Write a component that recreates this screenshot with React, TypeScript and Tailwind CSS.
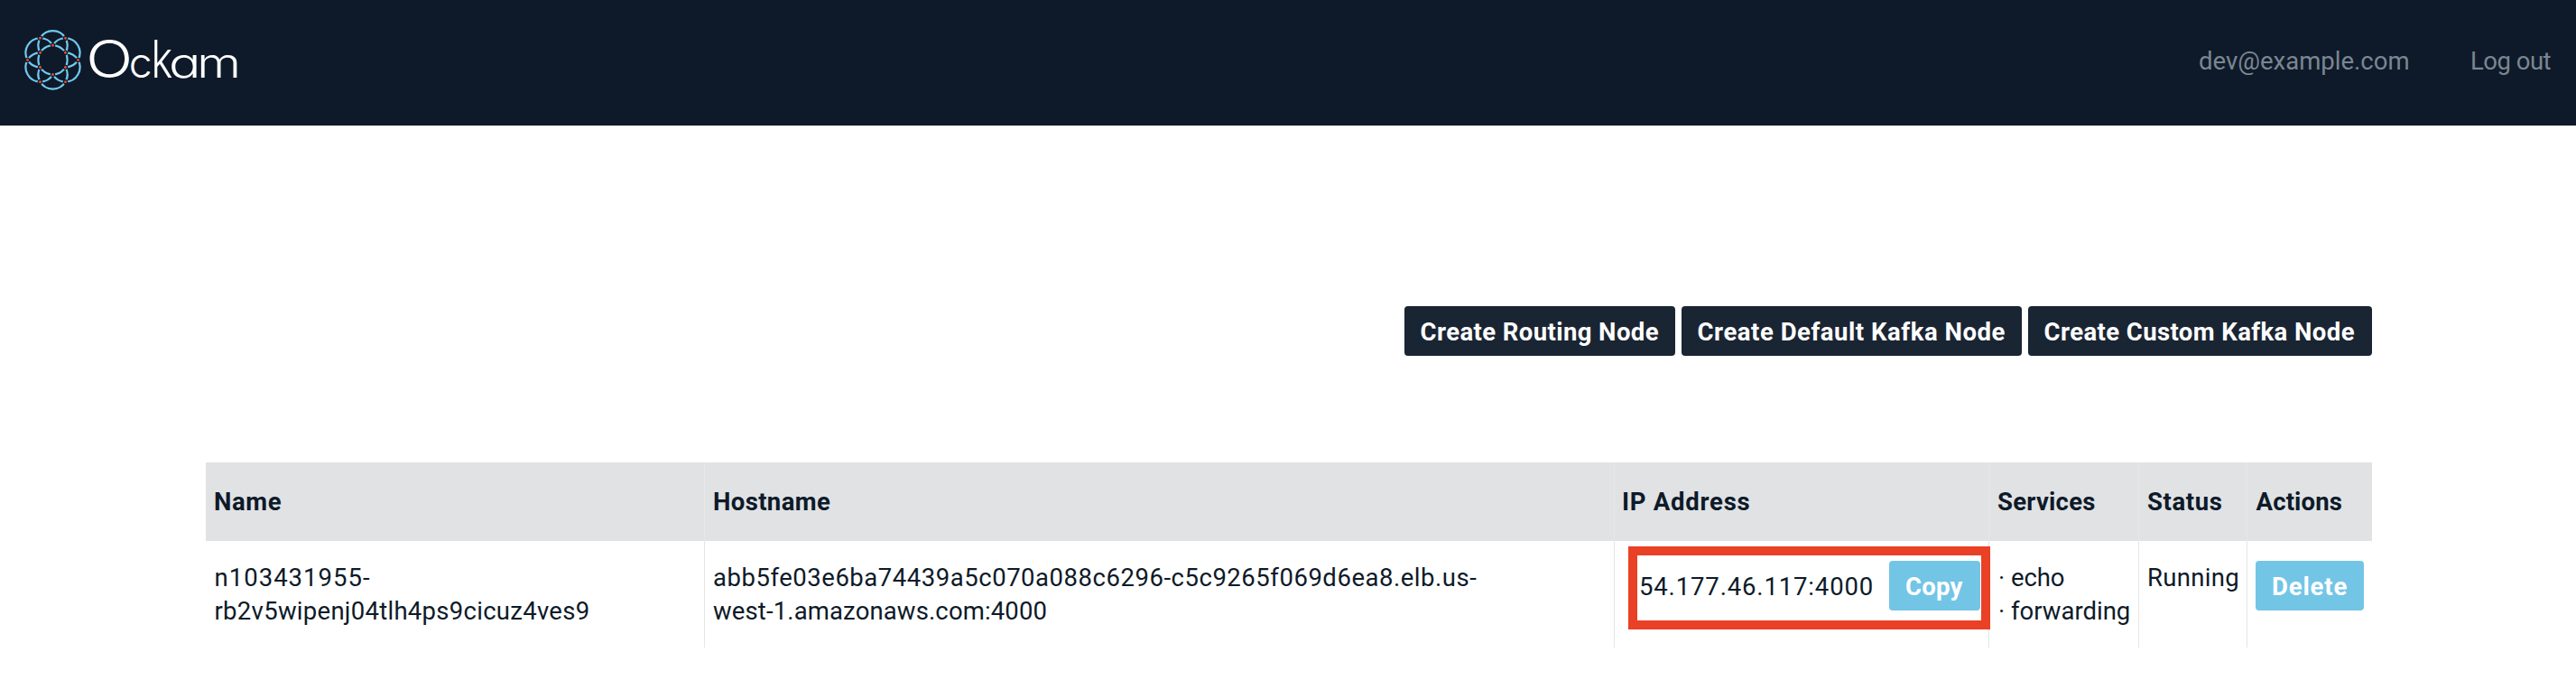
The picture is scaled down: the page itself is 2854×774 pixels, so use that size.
import React from "react";

const TURNS = [0, 60, 120, 180, 240, 300];

function Logo() {
  return (
    <svg width="280" height="90" viewBox="20 25 280 90" role="img" aria-label="Ockam">
      <g transform="translate(58.5 66.4)">
        <g fill="none" stroke="#71c9f0" strokeWidth="2.2">
          <circle r="16.1" />
          {TURNS.map((a) => (
            <path key={a} d="M-13.95 -8.05A16.1 16.1 0 1 1 13.95 -8.05" transform={`rotate(${a})`} />
          ))}
        </g>
        <g fill="#f0492e" stroke="#0e1a29" strokeWidth="1.3">
          {TURNS.map((a) => (
            <g key={a} transform={`rotate(${a})`}>
              <circle cy="-16.1" r="2.1" />
              <circle cx="28" r="2.1" />
            </g>
          ))}
        </g>
      </g>
      <g fill="#ffffff" fontFamily="Inter, sans-serif" fontWeight="350" fontSize="45" className="[font-feature-settings:'cv11']">
        <text transform="translate(95.2 85.8) scale(1.18 1)" fontSize="58">O</text>
        <text transform="translate(142.8 86) scale(1.03 1)">c</text>
        <text transform="translate(167.6 86) scale(1 1.27)">k</text>
        <text transform="translate(187 86) scale(1.31 1)">a</text>
        <text transform="translate(218.3 86) scale(1.24 1)">m</text>
      </g>
    </svg>
  );
}

function DarkButton({ label, className }: { label: string; className: string }) {
  return (
    <button className={`h-[55px] rounded bg-[#1a2533] pt-[2px] pl-[17.5px] text-left font-bold whitespace-nowrap text-white ${className}`}>
      {label}
    </button>
  );
}

function BlueButton({ label, className }: { label: string; className: string }) {
  return (
    <button className={`block h-[55px] shrink-0 rounded bg-[#73c5e6] pt-[2px] text-left font-bold text-white ${className}`}>
      {label}
    </button>
  );
}

const HEADERS = [
  { label: "Name", className: "w-[553px] pl-[9px] tracking-[0.6px]" },
  { label: "Hostname", className: "w-[1008px] pl-[9px] tracking-[0.37px]" },
  { label: "IP Address", className: "w-[415px] pl-[8px] tracking-[0.75px]" },
  { label: "Services", className: "w-[166px] pl-[9px] tracking-[0.26px]" },
  { label: "Status", className: "w-[120px] pl-[9px] tracking-[0.6px]" },
  { label: "Actions", className: "w-[138px] pl-[9.5px] tracking-[0.17px]" },
];

export default function App() {
  return (
    <div className="min-h-[774px] w-full bg-white font-['Roboto',sans-serif] text-[27.5px] leading-[37px] text-[#0e1a29]">
      <header className="flex h-[139px] items-start justify-between bg-[#0e1a29] pl-[20px] text-[#7b8692]">
        <div className="pt-[25px]">
          <Logo />
        </div>
        <nav className="flex pt-[49px] whitespace-nowrap">
          <a className="w-[301px] tracking-[0.01px]">dev@example.com</a>
          <a className="w-[117px] tracking-[-0.5px]">Log out</a>
        </nav>
      </header>

      <main className="pr-[226px] pl-[228px]">
        <div className="flex justify-end gap-[7px] pt-[200px]">
          <DarkButton label="Create Routing Node" className="w-[300px] tracking-[0.41px]" />
          <DarkButton label="Create Default Kafka Node" className="w-[377px] tracking-[0.54px]" />
          <DarkButton label="Create Custom Kafka Node" className="w-[381px] tracking-[0.41px]" />
        </div>

        <table className="mt-[118px] w-[2400px] table-fixed border-separate border-spacing-0 text-left">
          <thead>
            <tr className="h-[87px] bg-[#e0e2e4]">
              {HEADERS.map((h) => (
                <th key={h.label} className={`border-r border-[#e5e7e9] p-0 font-bold whitespace-nowrap last:border-r-0 ${h.className}`}>
                  {h.label}
                </th>
              ))}
            </tr>
          </thead>
          <tbody>
            <tr className="h-[118px] align-top whitespace-nowrap [&>td]:border-r [&>td]:border-[#e4e6e8] [&>td:last-child]:border-r-0">
              <td className="pt-[22px] pl-[9.5px]">
                <div className="tracking-[1.02px]">n103431955-</div>
                <div className="tracking-[0.28px]">rb2v5wipenj04tlh4ps9cicuz4ves9</div>
              </td>
              <td className="pt-[22px] pl-[9px]">
                <div className="tracking-[0.53px]">abb5fe03e6ba74439a5c070a088c6296-c5c9265f069d6ea8.elb.us-</div>
                <div className="tracking-[0.13px]">west-1.amazonaws.com:4000</div>
              </td>
              <td className="relative pt-[22px] pl-[27px]">
                <div className="flex">
                  <span className="w-[277px] pt-[10px] tracking-[0.85px]">54.177.46.117:4000</span>
                  <BlueButton label="Copy" className="w-[101px] pl-[18px] tracking-[0.2px]" />
                </div>
                <div className="absolute top-[6px] left-[15px] h-[92px] w-[401px] border-[10px] border-[#ea4026]" />
              </td>
              <td className="pt-[22px] pl-[9px]">
                <div className="flex">
                  <span className="w-[15px] pl-px">·</span>
                  <span className="tracking-[-0.1px]">echo</span>
                </div>
                <div className="flex">
                  <span className="w-[15px] pl-px">·</span>
                  <span className="tracking-[0px]">forwarding</span>
                </div>
              </td>
              <td className="pt-[22px] pl-[9px] tracking-[0.3px]">Running</td>
              <td className="pt-[22px] pl-[9px]">
                <BlueButton label="Delete" className="w-[120px] pl-[18px] tracking-[0.85px]" />
              </td>
            </tr>
          </tbody>
        </table>
      </main>
    </div>
  );
}
